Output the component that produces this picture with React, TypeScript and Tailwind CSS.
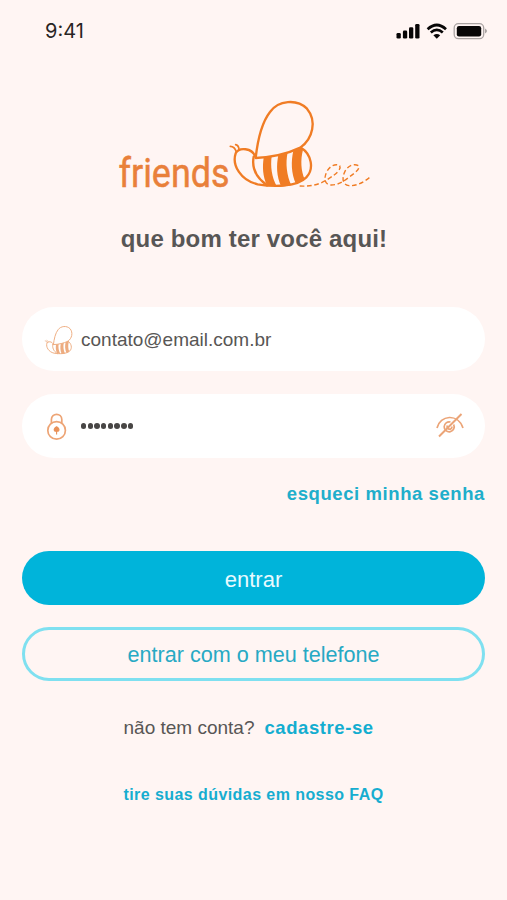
import React from "react";

function BeeShape({ stroke }: { stroke: number }) {
  return (
    <g fill="none" stroke="currentColor" strokeWidth={stroke} strokeLinecap="round" strokeLinejoin="round">
      <path d="M92 204C98 150 110 98 135 66C160 30 216 26 246 56C276 92 264 146 226 173C190 190 140 202 92 204Z" />
      <path d="M91 200C82 174 42 170 32 190C20 226 48 272 98 283C150 292 216 290 244 262C268 238 260 192 228 173" />
      <path d="M86 200C80 232 92 262 126 286" />
      <path d="M16 169C25 169 31 176 34 186M32 164C39 166 42 172 42 180" strokeWidth={stroke * 0.75} />
      <g fill="currentColor" stroke="none">
        <path d="M116 203L140 199C136 230 140 260 155 289L126 286C113 258 112 230 116 203Z" />
        <path d="M160 195L188 187C181 220 185 256 199 286L169 290C154 258 154 226 160 195Z" />
        <path d="M205 182L228 171L234 179C226 210 228 242 239 268L213 282C198 250 198 213 205 182Z" />
      </g>
    </g>
  );
}

function Logo() {
  return (
    <svg className="h-[120px] w-[260px] text-[#f07c24]" viewBox="115 95 260 120">
      <text x="118.5" y="186.5" fontSize="41.5" textLength="111" lengthAdjust="spacingAndGlyphs" fill="#e9803a" stroke="#e9803a" strokeWidth="0.5" className="font-['Roboto',sans-serif]">
        friends
      </text>
      <g transform="translate(225 90) scale(.3333)">
        <BeeShape stroke={7} />
        <path
          d="M224 288C256 290 284 284 308 268C334 252 350 238 344 227C334 220 316 226 306 244C296 264 298 282 316 285C338 286 354 276 374 260C394 246 406 236 400 227C388 220 370 226 360 244C350 264 352 284 372 287C394 289 418 276 438 259"
          fill="none" stroke="currentColor" strokeWidth="4.2" strokeDasharray="14 8"
        />
      </g>
    </svg>
  );
}

function StatusBar() {
  return (
    <header className="flex h-[62px] items-center justify-between pl-[45px] pr-5">
      <span className="font-['Inter',sans-serif] text-[20px] text-[#292524]">9:41</span>
      <svg className="h-5 w-[92px]" viewBox="395 21 92 20">
        <g fill="#080606">
          <rect x="396.5" y="33" width="4.3" height="5.6" rx="1.3" />
          <rect x="402.9" y="30.6" width="4.3" height="8" rx="1.3" />
          <rect x="409" y="27.3" width="4.3" height="11.3" rx="1.3" />
          <rect x="415.2" y="24" width="4.3" height="14.6" rx="1.3" />
          <rect x="456.8" y="26" width="24.4" height="10.5" rx="2.2" />
          <path d="M433.4 35.3Q436.8 32.8 440.2 35.3L436.8 38.7Z" />
        </g>
        <g fill="none" stroke="#080606" strokeWidth="2.7">
          <path d="M427.6 29.2Q436.8 20.8 446 29.2" />
          <path d="M430.8 32.6Q436.8 27.3 442.8 32.6" />
        </g>
        <rect x="454.2" y="23.7" width="29.5" height="15" rx="4.2" fill="none" stroke="#aaa3a2" strokeWidth="1.3" />
        <path d="M485 28.5Q489 31 485 33.5Z" fill="#aaa3a2" />
      </svg>
    </header>
  );
}

function LockIcon() {
  return (
    <svg className="mt-px h-[30px] w-6" viewBox="0 0 24 30" fill="none" stroke="#eda475" strokeWidth="1.7">
      <circle cx="11.6" cy="18.4" r="8.8" />
      <path d="M6.4 11V7.5C6.4 0.6 16.8 0.6 16.8 7.5V11" />
      <path d="M11.6 14.8C7.1 17.8 10.1 20.2 11.6 18.8C13.1 20.2 16.1 17.8 11.6 14.8ZM11.6 18V22.4" fill="#e99158" stroke="#e99158" strokeWidth="1.1" />
    </svg>
  );
}

function EyeOffIcon() {
  return (
    <svg className="h-7 w-7" viewBox="436 412 28 28" fill="none" stroke="#eba477" strokeWidth="1.7">
      <path d="M437 428C440 415 458 413 463 428" />
      <path d="M453.6 424.5A5 5 0 1 1 450.5 422M447.5 425.5a2.4 2.4 0 1 0 4.4 1" />
      <path d="M439 436.5L461.5 414" strokeWidth="1.9" />
    </svg>
  );
}

export default function App() {
  return (
    <div className="min-h-[900px] w-[507px] bg-[#fff5f3] font-['Liberation_Sans',Arial,sans-serif] text-[#585655]">
      <StatusBar />
      <main className="flex flex-col px-[22px]">
        <div className="mt-[33px] flex pl-[93px]">
          <Logo />
        </div>
        <h1 className="mt-2 pl-px text-center text-2xl leading-8 font-bold tracking-[0.17px]">que bom ter você aqui!</h1>
        <div className="mt-[52px] flex h-[64px] items-center rounded-full bg-white pl-[22px]">
          <svg className="mt-[2px] h-[30px] w-[29px] text-[#edac80]" viewBox="8 22 262 278">
            <BeeShape stroke={9} />
          </svg>
          <span className="mt-px ml-2 text-[19px] leading-6">contato@email.com.br</span>
        </div>
        <div className="mt-[23px] flex h-[64px] items-center rounded-full bg-white pr-[21px] pl-[22.5px]">
          <LockIcon />
          <span className="ml-[12.5px] flex gap-[1.3px]">
            {Array.from({ length: 8 }, (_, i) => (
              <i key={i} className="size-[5.4px] rounded-full bg-[#484645]" />
            ))}
          </span>
          <span className="ml-auto">
            <EyeOffIcon />
          </span>
        </div>
        <a className="mt-6 self-end text-[18.5px] leading-6 font-bold tracking-[0.58px] text-[#20aecb]">esqueci minha senha</a>
        <button className="mt-[45px] h-[54px] rounded-full bg-[#00b4da] pt-0.5 text-[22px] text-[#e8faff]">entrar</button>
        <button className="mt-[22px] h-[54px] rounded-full border-[3px] border-[#7fe0f0] pt-0.5 text-[21.6px] text-[#27a9c4]">
          entrar com o meu telefone
        </button>
        <p className="mt-[35px] flex items-center pl-[101.5px] text-[19px] leading-6">
          <span>não tem conta?</span>
          <a className="ml-[10px] text-[18.5px] leading-6 font-bold tracking-[0.58px] text-[#13add0]">cadastre-se</a>
        </p>
        <a className="mt-[43px] text-center text-base leading-6 font-bold tracking-[0.43px] text-[#16add0]">tire suas dúvidas em nosso FAQ</a>
      </main>
    </div>
  );
}
